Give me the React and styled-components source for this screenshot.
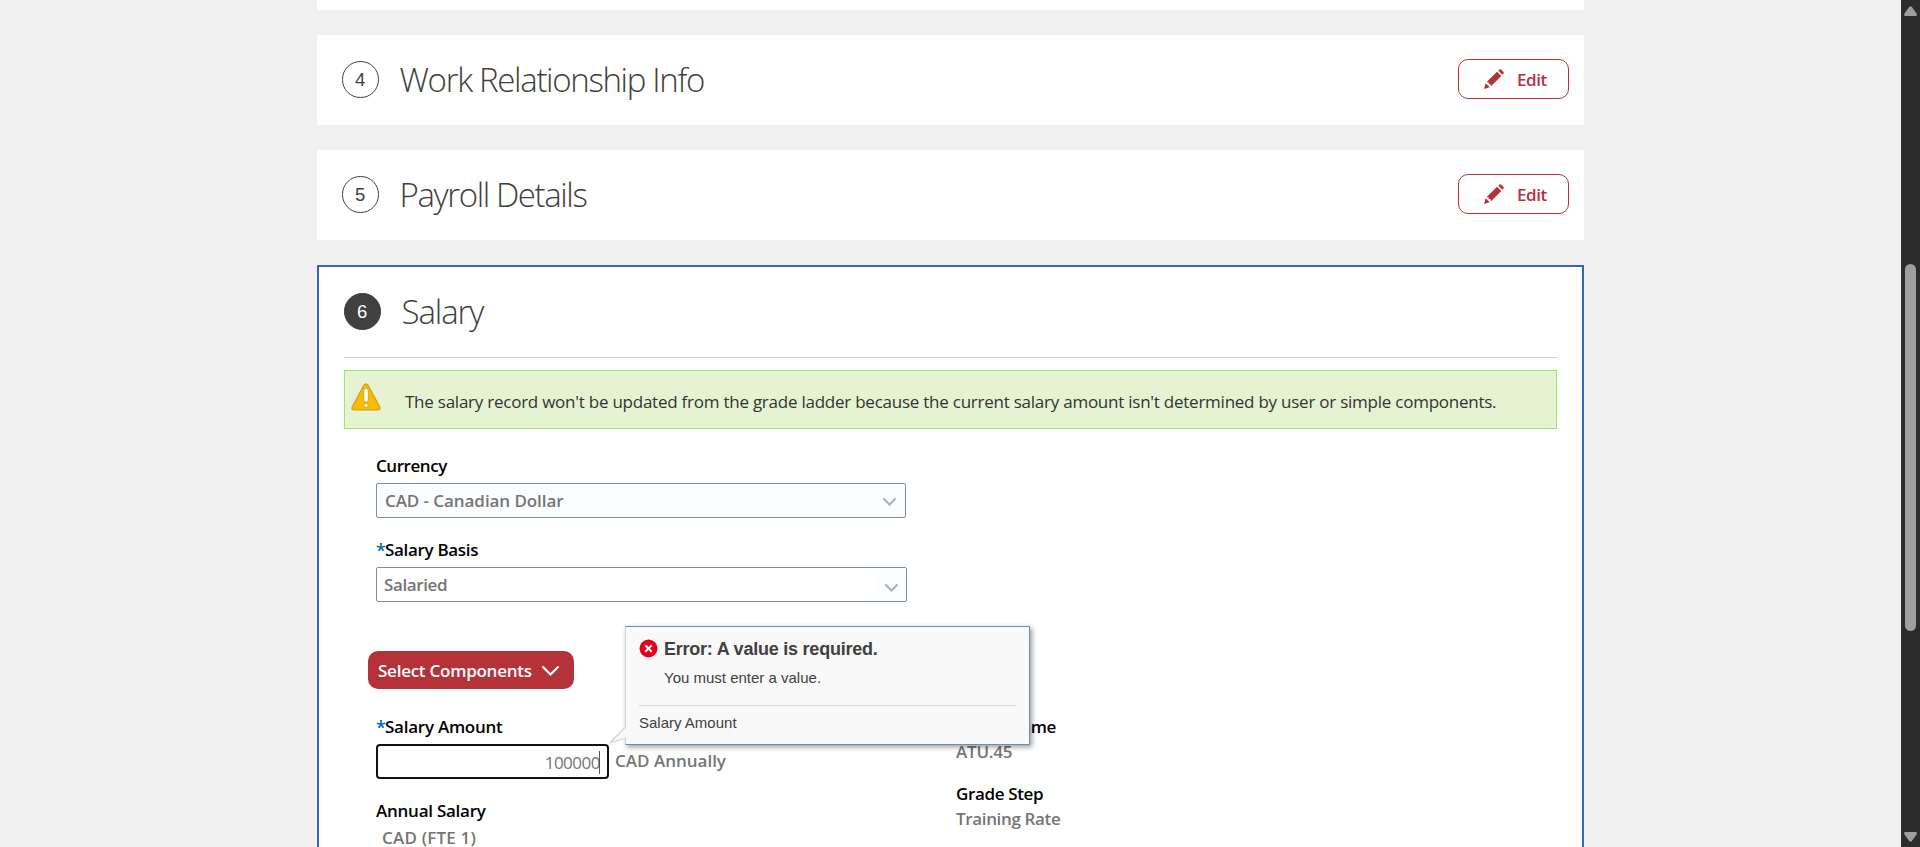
import React from "react";
import styled, { createGlobalStyle, css } from "styled-components";

const GlobalStyle = createGlobalStyle`
  *, *::before, *::after { box-sizing: border-box; }
  body {
    margin: 0;
    background: #f0f0f0;
    font-family: "Open Sans", "Noto Sans", sans-serif;
    font-size: 17px;
    line-height: 24px;
    color: #000;
  }
`;

const arial = css`
  font-family: "Liberation Sans", Arial, sans-serif;
`;

const Page = styled.div`
  display: flex;
  height: 847px;
  overflow: hidden;
`;

const Content = styled.main`
  flex: 1;
  display: flex;
  flex-direction: column;
  align-items: center;
  gap: 25px;
  overflow: hidden;
`;

const Section = styled.section`
  flex: none;
  width: 1267px;
  background: #fff;
`;

const ClippedSection = styled(Section)`
  height: 10px;
`;

const CollapsedSection = styled(Section)`
  display: flex;
  align-items: center;
  height: 90px;
  padding: 0 15px 0 25px;
`;

const ActiveSection = styled(Section)`
  height: 700px;
  border: 2px solid #3267b5;
  padding: 0 25px;
`;

const StepNumber = styled.span`
  ${arial}
  flex: none;
  display: flex;
  align-items: center;
  justify-content: center;
  width: 36.5px;
  height: 36.5px;
  margin-top: -1px;
  border: 1px solid #404040;
  border-radius: 50%;
  font-size: 18.5px;
  color: ${(p) => (p.$active ? "#fff" : "#404040")};
  background: ${(p) => (p.$active ? "#404040" : "#fff")};
`;

const Title = styled.h2`
  flex: 1;
  margin: 0 0 0 21px;
  font-size: 33px;
  font-weight: 300;
  line-height: 44px;
  letter-spacing: ${(p) => p.$tracking}px;
  color: #404040;
`;

const EditButton = styled.button`
  display: flex;
  align-items: center;
  width: 111px;
  height: 40px;
  margin-top: -2px;
  padding: 0 0 0 25px;
  gap: 13px;
  border: 1px solid #b63239;
  border-radius: 10px;
  background: #fff;
  font: 600 17px/24px "Open Sans", sans-serif;
  letter-spacing: -0.4px;
  color: #b63239;
`;

const ButtonText = styled.span`
  padding-top: 1px;
`;

const SectionHeader = styled.header`
  display: flex;
  align-items: center;
  height: 91px;
  border-bottom: 1px solid #d0d0d0;
`;

const Banner = styled.div`
  display: flex;
  align-items: center;
  height: 59px;
  margin-top: 12px;
  padding-left: 6px;
  border: 1px solid #9ae56c;
  background: #e5f3d2;
  color: #333;
`;

const BannerText = styled.p`
  margin: 5px 0 0 24px;
  letter-spacing: -0.242px;
  white-space: nowrap;
`;

const WarningIcon = styled.svg`
  display: block;
  margin-top: -5px;
`;

const Form = styled.div`
  display: flex;
  flex-direction: column;
  align-items: flex-start;
  padding: 25px 0 0 32px;
`;

const Label = styled.label`
  display: flex;
  font-weight: 600;
  letter-spacing: ${(p) => p.$tracking ?? -0.32}px;
  white-space: nowrap;
`;

const Required = styled.span`
  width: 9px;
  font-size: 18px;
  font-weight: 600;
  color: #0067b8;
`;

const SelectBox = styled.div`
  display: flex;
  align-items: center;
  justify-content: space-between;
  width: ${(p) => p.$width}px;
  height: 35px;
  margin: 5px 0 20px;
  padding: ${(p) => p.$padding};
  border: 1px solid #7b919c;
  border-radius: 2px;
  background: ${(p) => p.$fill};
  font-weight: 600;
  letter-spacing: ${(p) => p.$tracking}px;
  color: #757575;
`;

const ComponentsButton = styled.button`
  display: flex;
  align-items: center;
  gap: 10px;
  width: 206px;
  height: 38px;
  margin: 29px 0 26px -8px;
  padding: 0 0 0 10px;
  border: 0;
  border-radius: 10px;
  background: #b63239;
  font: 600 17px/24px "Open Sans", sans-serif;
  letter-spacing: -0.25px;
  color: #fff;
`;

const Columns = styled.div`
  display: grid;
  grid-template-columns: 580px 1fr;
`;

const Column = styled.div`
  display: flex;
  flex-direction: column;
  align-items: flex-start;
`;

const AmountRow = styled.div`
  position: relative;
  display: flex;
  align-items: center;
  gap: 6px;
  margin: 5px 0 20px;
`;

const AmountField = styled.div`
  display: flex;
  align-items: center;
  justify-content: flex-end;
  width: 233px;
  height: 35px;
  padding: 2px 7px 0 0;
  border: 2px solid #111;
  border-radius: 4px;
  background: #fff;
  letter-spacing: -0.5px;
  color: #757575;
`;

const Caret = styled.i`
  width: 1px;
  height: 23px;
  margin-left: -1px;
  background: #555;
`;

const Value = styled.span`
  font-weight: 600;
  letter-spacing: ${(p) => p.$tracking ?? 0}px;
  white-space: nowrap;
  color: #757575;
`;

const UnitValue = styled(Value)`
  margin-bottom: 2px;
`;

const AnnualValue = styled(Value)`
  margin: 3px 0 0 6px;
`;

const GradeItem = styled.div`
  display: flex;
  flex-direction: column;
  gap: 1px;
  margin-bottom: 18px;
`;

const ErrorPopup = styled.div`
  ${arial}
  position: absolute;
  left: 249px;
  bottom: 34px;
  width: 405px;
  height: 119px;
  padding: 11px 13px 0 13px;
  border: 1px solid #6f8ea5;
  border-left-color: #c8d3dd;
  background: #f9f9f9;
  box-shadow: 2px 2px 5px rgba(0, 0, 0, 0.4);
  font-size: 15px;
  line-height: 20px;
  color: #404040;
`;

const PopupTail = styled.svg`
  position: absolute;
  left: -17px;
  bottom: -1px;
`;

const PopupTitle = styled.div`
  display: flex;
  align-items: center;
  gap: 6px;
  height: 21px;
  font-size: 18px;
  font-weight: 700;
  letter-spacing: -0.23px;
  white-space: nowrap;
`;

const PopupMessage = styled.p`
  margin: 9px 0 17px 25px;
`;

const PopupField = styled.div`
  padding-top: 7px;
  border-top: 1px solid #d3dde6;
`;

const ScrollTrack = styled.div`
  flex: none;
  display: flex;
  flex-direction: column;
  align-items: center;
  width: 19px;
  padding: 6px 0 5px;
  background: #2c2c2c;
`;

const ScrollThumb = styled.div`
  width: 11px;
  height: 367px;
  margin: 248px 0 auto;
  border-radius: 5.5px;
  background: #9f9f9f;
`;

const Pencil = () => (
  <svg width="20" height="20" viewBox="0 0 60 60" fill="#b63239">
    <path d="M0 60 L5 43 L17 55 Z" />
    <path d="M8 39 L39 8 L52 21 L21 52 L19 45 L14 45 L14 40 Z" />
    <path d="M43 5 L46 2 Q49 -1 52 2 L58 8 Q61 11 58 14 L55 17 Z" />
  </svg>
);

const ChevronIcon = styled.svg`
  flex: none;
  margin-top: ${(p) => p.$drop ?? 0}px;
`;

const Chevron = ({ width, height, stroke, color, drop }) => (
  <ChevronIcon width={width} height={height} viewBox={`0 0 ${width} ${height}`} fill="none" $drop={drop}>
    <path
      d={`M1 1 L${width / 2} ${height - 1.5} L${width - 1} 1`}
      stroke={color}
      strokeWidth={stroke}
      strokeLinecap="round"
    />
  </ChevronIcon>
);

const Warning = () => (
  <WarningIcon width="30" height="28" viewBox="0 0 30 28">
    <path d="M13 2.2 Q15 -0.4 17 2.2 L28.8 24 Q29.8 26.8 27 26.8 H3 Q0.2 26.8 1.2 24 Z" fill="#f9bd00" stroke="#cfa020" strokeWidth="1.2" />
    <rect x="12.7" y="5.6" width="4.6" height="13.4" rx="1.8" fill="#fff" stroke="#d39b00" strokeWidth="0.8" />
    <circle cx="15" cy="22.3" r="2.1" fill="#fff" stroke="#d39b00" strokeWidth="0.8" />
  </WarningIcon>
);

const ErrorMark = () => (
  <svg width="19" height="19" viewBox="0 0 19 19">
    <circle cx="9.5" cy="9.5" r="9" fill="#e2001f" />
    <path d="M6.3 6.3 L12.7 12.7 M12.7 6.3 L6.3 12.7" stroke="#fff" strokeWidth="2" />
  </svg>
);

const CollapsedStep = ({ number, title, tracking }) => (
  <CollapsedSection>
    <StepNumber>{number}</StepNumber>
    <Title $tracking={tracking}>{title}</Title>
    <EditButton>
      <Pencil />
      <ButtonText>Edit</ButtonText>
    </EditButton>
  </CollapsedSection>
);

export default function App() {
  return (
    <>
      <GlobalStyle />
      <Page>
        <Content>
          <ClippedSection />
          <CollapsedStep number="4" title="Work Relationship Info" tracking={-1.33} />
          <CollapsedStep number="5" title="Payroll Details" tracking={-1.4} />
          <ActiveSection>
            <SectionHeader>
              <StepNumber $active>6</StepNumber>
              <Title $tracking={-1.1}>Salary</Title>
            </SectionHeader>
            <Banner>
              <Warning />
              <BannerText>
                The salary record won't be updated from the grade ladder because the current salary amount isn't determined by user or simple components.
              </BannerText>
            </Banner>
            <Form>
              <Label $tracking={-0.45}>Currency</Label>
              <SelectBox $width={530} $padding="1px 9px 0 8px" $fill="#fbfdff" $tracking={-0.07}>
                CAD - Canadian Dollar
                <Chevron width={13} height={8} stroke={2} color="#adb0b3" drop={2} />
              </SelectBox>
              <Label>
                <Required>*</Required>Salary Basis
              </Label>
              <SelectBox
                $width={531}
                $padding="1px 8px 0 7px"
                $fill="linear-gradient(90deg, #fff 500px, #fbfdff 500px)"
                $tracking={-0.38}
              >
                Salaried
                <Chevron width={13} height={8} stroke={2} color="#adb0b3" drop={5} />
              </SelectBox>
              <ComponentsButton>
                <ButtonText>Select Components</ButtonText>
                <Chevron width={17} height={10} stroke={2.2} color="#fff" drop={1} />
              </ComponentsButton>
              <Columns>
                <Column>
                  <Label $tracking={-0.25}>
                    <Required>*</Required>Salary Amount
                  </Label>
                  <AmountRow>
                    <AmountField>
                      100000
                      <Caret />
                    </AmountField>
                    <UnitValue>CAD Annually</UnitValue>
                    <ErrorPopup>
                      <PopupTail width="17" height="20" viewBox="0 0 17 20">
                        <path d="M17 2 L1 18 L17 13 Z" fill="#f9f9f9" />
                        <path d="M16.5 2 L1 18 L16.5 13" fill="none" stroke="#cdd6e0" strokeWidth="1.3" />
                      </PopupTail>
                      <PopupTitle>
                        <ErrorMark />
                        Error: A value is required.
                      </PopupTitle>
                      <PopupMessage>You must enter a value.</PopupMessage>
                      <PopupField>Salary Amount</PopupField>
                    </ErrorPopup>
                  </AmountRow>
                  <Label $tracking={-0.25}>Annual Salary</Label>
                  <AnnualValue $tracking={0.19}>CAD (FTE 1)</AnnualValue>
                </Column>
                <Column>
                  <GradeItem>
                    <Label $tracking={-0.35}>Grade Name</Label>
                    <Value $tracking={-0.2}>ATU.45</Value>
                  </GradeItem>
                  <GradeItem>
                    <Label $tracking={-0.35}>Grade Step</Label>
                    <Value $tracking={-0.35}>Training Rate</Value>
                  </GradeItem>
                </Column>
              </Columns>
            </Form>
          </ActiveSection>
        </Content>
        <ScrollTrack>
          <svg width="13" height="10" viewBox="0 0 13 10" fill="#9f9f9f">
            <path d="M1 10 Q-0.5 9.5 0.5 7.5 L5 1.2 Q6.5 -0.8 8 1.2 L12.5 7.5 Q13.5 9.5 12 10 Z" />
          </svg>
          <ScrollThumb />
          <svg width="13" height="10" viewBox="0 0 13 10" fill="#9f9f9f">
            <path d="M1 0 Q-0.5 0.5 0.5 2.5 L5 8.8 Q6.5 10.8 8 8.8 L12.5 2.5 Q13.5 0.5 12 0 Z" />
          </svg>
        </ScrollTrack>
      </Page>
    </>
  );
}
